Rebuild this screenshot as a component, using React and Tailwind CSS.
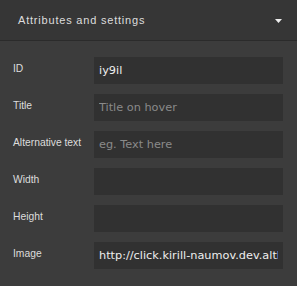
import React from 'react';

const traits = [
  { label: 'ID', value: 'iy9il' },
  { label: 'Title', placeholder: 'Title on hover' },
  { label: 'Alternative text', placeholder: 'eg. Text here' },
  { label: 'Width' },
  { label: 'Height' },
  { label: 'Image', value: 'http://click.kirill-naumov.dev.altlinux.org/img.png' },
];

const App = () => {
  return (
    <div className="w-[297px] h-[286px] bg-[#3c3c3c] overflow-hidden" style={{ fontFamily: '"Liberation Sans", Arial, sans-serif' }}>
      {/* Шапка секции */}
      <div className="h-[41px] flex items-center justify-between pl-[18px] pr-[15px] bg-[#363636] border-b border-[#2b2b2b]">
        <span className="text-[11px] tracking-[0.8px] text-[#dddddd]">Attributes and settings</span>
        <svg width="7" height="4" viewBox="0 0 7 4" className="mt-[1px]">
          <polygon points="0,0 7,0 3.5,4" fill="#eeeeee" />
        </svg>
      </div>

      <div className="flex flex-col gap-[10px] pt-[16px] pl-[13px] pr-[14px]">
        {traits.map((t) => (
          <div key={t.label} className="flex items-center h-[27px]">
            <label className="w-[81px] text-[10.3px] text-[#dddddd] -mt-[4px]">{t.label}</label>
            <input
              className="w-[189px] h-[27px] bg-[#313131] px-[5px] text-[11.3px] text-[#eeeeee] placeholder-[#8a8a8a] outline-none"
              style={{ fontFamily: '"DejaVu Sans", Verdana, sans-serif' }}
              defaultValue={t.value}
              placeholder={t.placeholder}
            />
          </div>
        ))}
      </div>
    </div>
  );
};

export default App;
